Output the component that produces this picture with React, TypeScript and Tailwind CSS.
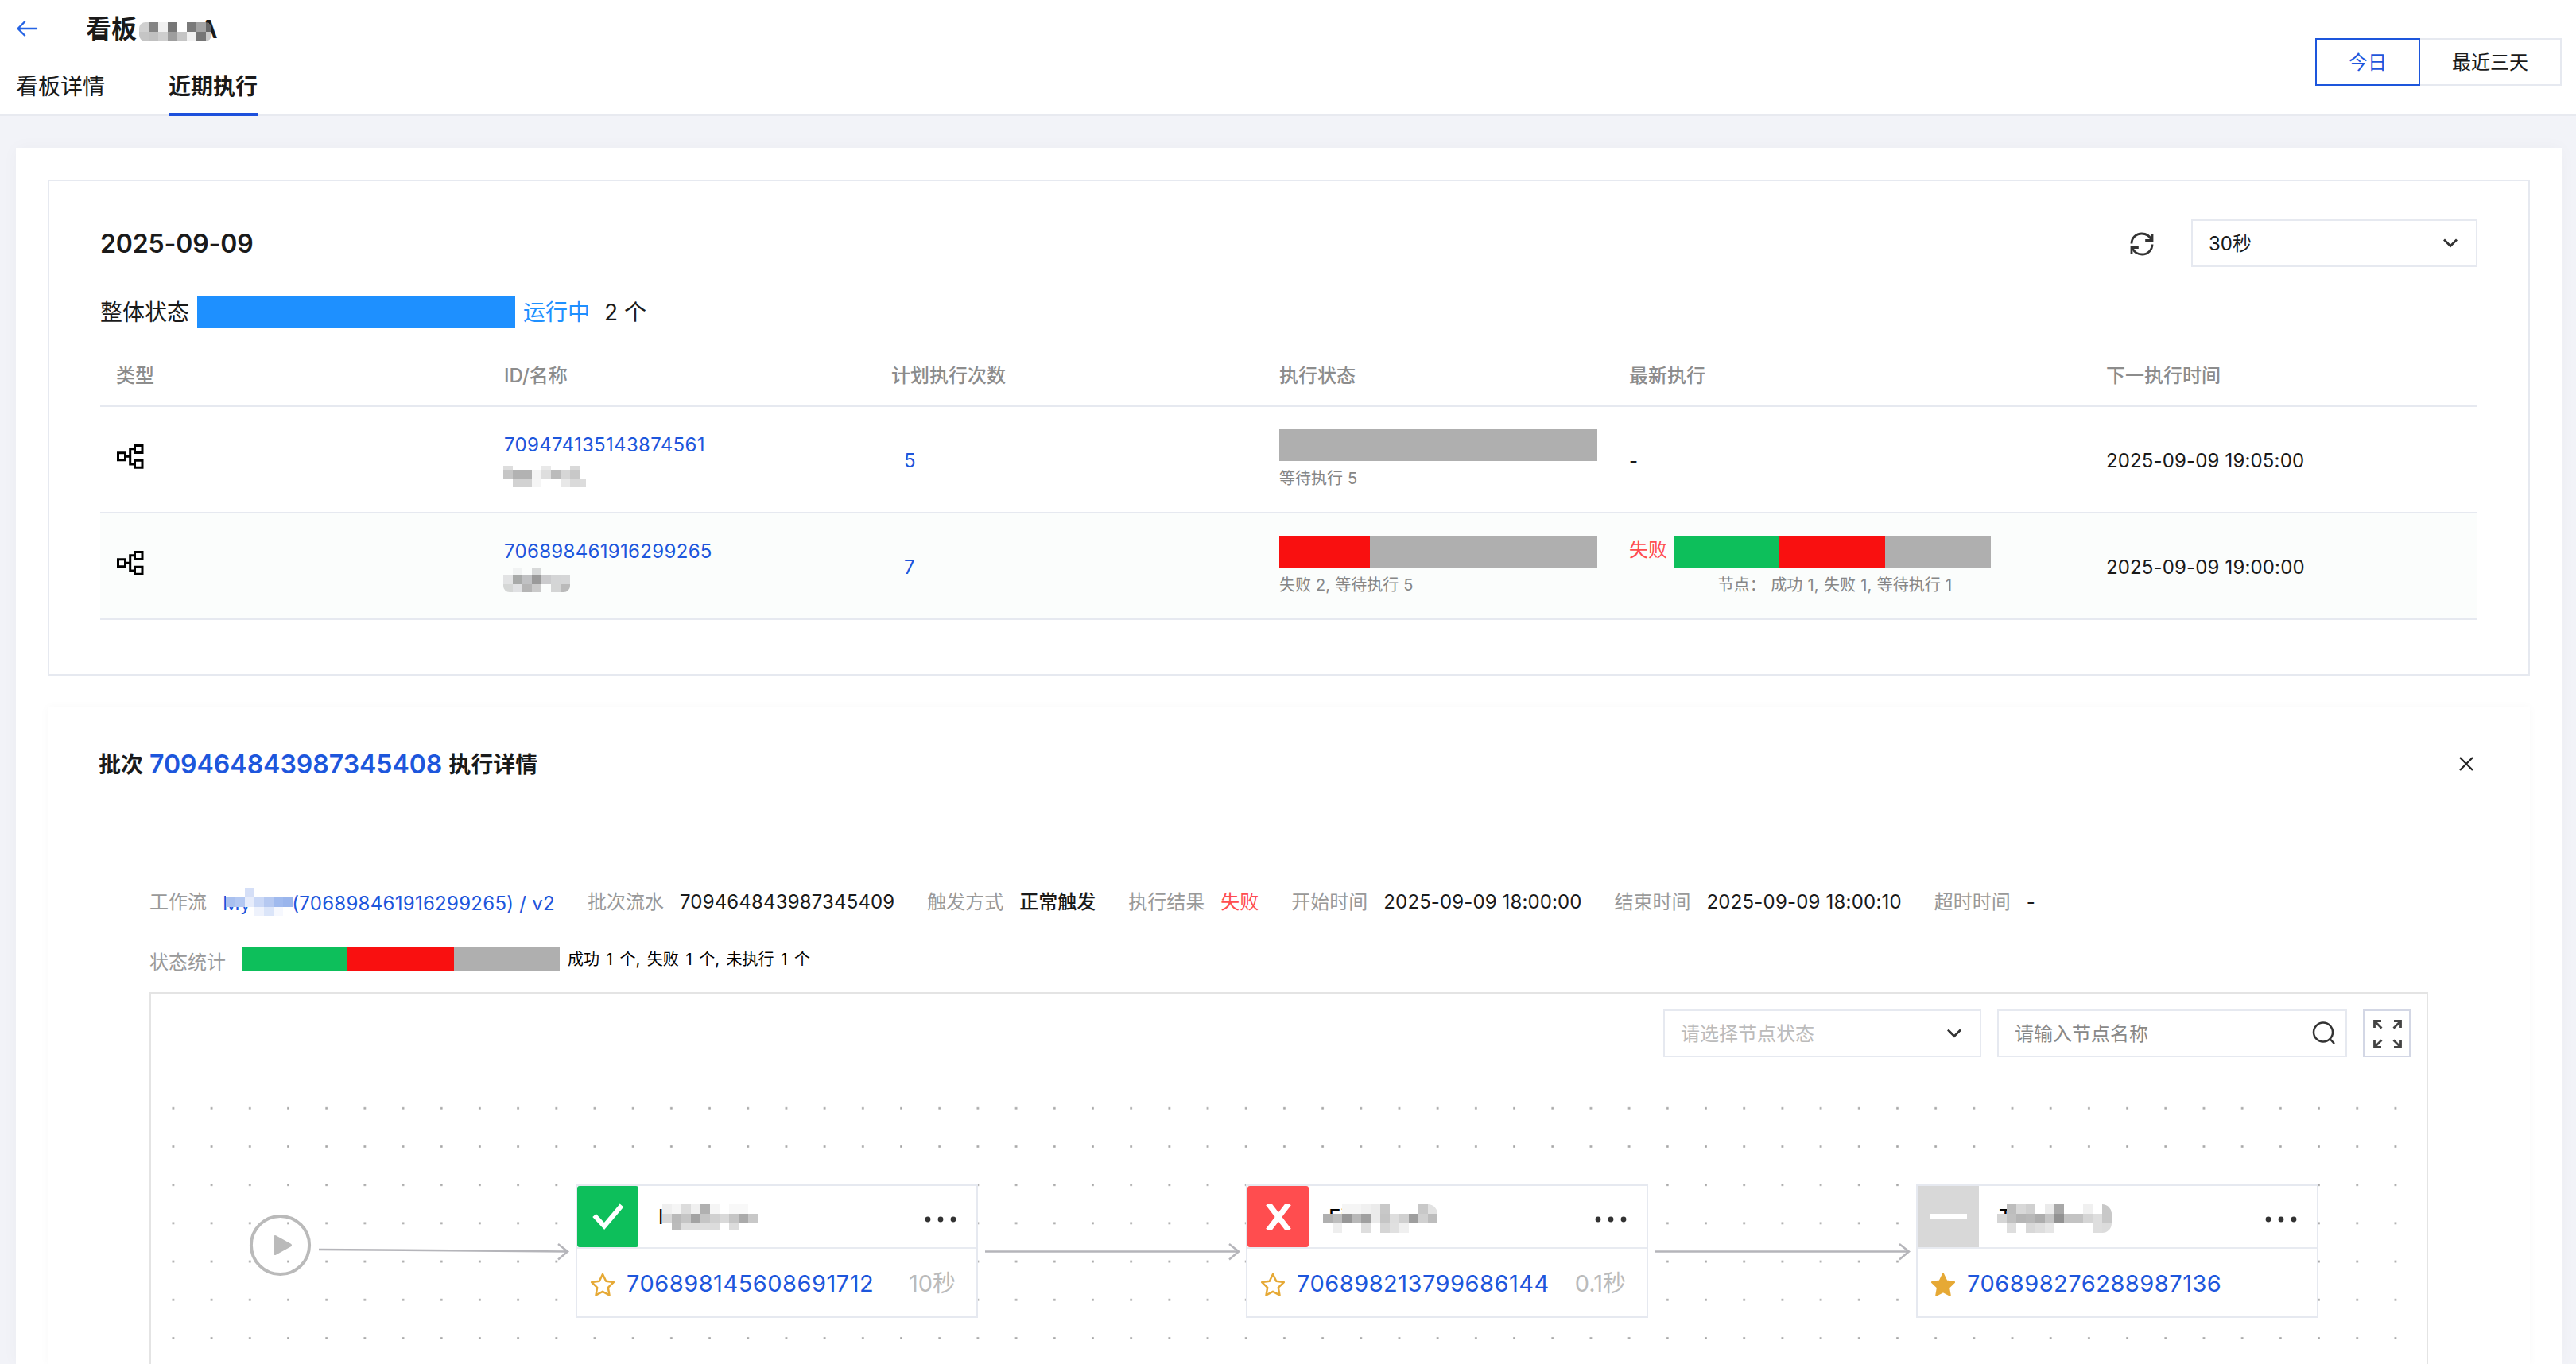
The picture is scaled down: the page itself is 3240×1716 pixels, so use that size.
import React from "react";

const SANS = "font-['Inter','Noto_Sans_CJK_SC',sans-serif]";

/* ---------- masked (pixelated) names ---------- */

type Cells = (string | 0)[][];

function Mosaic({ rows, className }: { rows: Cells; className: string }) {
  return (
    <div className={`absolute overflow-hidden ${className}`}>
      {rows.map((row, r) => (
        <div key={r} className="flex h-3">
          {row.map((c, i) => (
            <div key={i} className="h-3 w-3 shrink-0" style={c ? { backgroundColor: c } : undefined} />
          ))}
        </div>
      ))}
    </div>
  );
}

const titleMask: Cells = [
  ["#d0d0d0", "#848484", "#f0f0f0", "#777777", "#ffffff", "#7a7a7a", "#a3a3a3", "#666666"],
  ["#c5c5c5", "#c0c0c0", "#cecece", "#9e9e9e", "#c5c5c5", "#f0f0f0", "#757575", "#c9c9c9"],
];
const rowOneMask: Cells = [
  ["#dddddd", 0, 0, 0, "#e9e9e9", 0, 0, "#d9d9d9", 0],
  ["#c6c6c6", "#b2b2b2", "#b2b2b2", "#f4f4f4", "#dedede", "#bbbbbb", "#d6d6d6", "#c8c8c8", 0],
  [0, "#d2d2d2", "#d2d2d2", "#f5f5f5", 0, 0, "#e8e8e8", "#dadada", "#dcdcdc"],
];
const rowTwoMask: Cells = [
  [0, "#f1f3f3", 0, "#d7d9d9", 0, 0, 0],
  ["#e2e3e4", "#a8aaa9", "#c0c1c3", "#9a9a9a", "#cbcbcd", "#d4d5d6", "#d5d6d7"],
  ["#d5d7d6", "#e0e1e3", "#b5b5b5", "#cacaca", 0, "#d4d5d5", "#bababa"],
];
const linkMask: Cells = [
  ["#ffffff", "#ffffff", "#d5dff7", "#ffffff", "#ffffff", "#ffffff", "#ffffff"],
  ["#a9c0ef", "#b3c8f2", "#e6ecfb", "#cad8f6", "#b6c9f1", "#a0baee", "#9ab5ec"],
  [0, 0, 0, "#eef2fc", "#dbe5f9", "#f6f8fe", 0],
];
const nodeOneMask: Cells = [
  ["#efefef", "#f5f5f5", "#dcdcdc", "#f0f0f0", "#b0b0b0", "#f5f5f5", 0, "#f8f8f8", "#f8f8f8", 0],
  ["#d8d8d8", "#b9b9b9", "#c5c5c5", "#a3a3a3", "#c5c5c5", "#d0d0d0", "#d9d9d9", "#c5c5c5", "#aaaaaa", "#c8c8c8"],
  [0, "#bbbbbb", "#dedede", "#dedede", "#dedede", "#dcdcdc", 0, "#dcdcdc", 0, 0],
];
const nodeTwoMask: Cells = [
  [0, 0, "#f5f5f5", "#f5f5f5", "#f0f0f0", "#ebebeb", "#c8c8c8", 0, 0, 0, "#c8c8c8", "#e2e2e2"],
  ["#b0b0b0", "#bdbdbd", "#979797", "#b8b8b8", "#a0a0a0", "#ebebeb", "#c5c5c5", "#dedede", "#d0d0d0", "#9e9e9e", "#d0d0d0", "#bdbdbd"],
  ["#ffffff", "#eeeeee", "#ffffff", 0, "#dedede", 0, "#d5d5d5", "#e0e0e0", "#f0f0f0", 0, 0, 0],
];
const nodeThreeMask: Cells = [
  [0, "#bdbdbd", "#d8d8d8", "#d0d0d0", 0, "#ebebeb", "#a8a8a8", 0, 0, "#f0f0f0", 0, "#c8c8c8"],
  ["#d5d5d5", "#c0c0c0", "#b5b5b5", "#b8b8b8", "#adadad", "#c5c5c5", "#929292", "#c3c3c3", "#c3c3c3", "#d5d5d5", "#dedede", "#c8c8c8"],
  ["#ffffff", "#dedede", "#ffffff", "#d8d8d8", "#dedede", "#e6e6e6", 0, 0, 0, 0, "#dedede", "#dcdcdc"],
];

/* ---------- icons ---------- */

function BackIcon() {
  return (
    <svg className="-mt-[2px]" width="28" height="20" viewBox="0 0 28 20" fill="none" stroke="#2563e4" strokeWidth="2.4" strokeLinecap="round" strokeLinejoin="round">
      <path d="M26 10H2.5M11 1.5 2.5 10l8.5 8.5" />
    </svg>
  );
}

function RefreshIcon() {
  return (
    <svg className="mt-[2px]" width="30" height="30" viewBox="0 0 30 30" fill="none" stroke="#333" strokeWidth="2.8">
      <path d="M2 14.6C2 7.4 7.700 2 14.800 2c5.200 0 9.900 3 12 7.500" />
      <path d="M28 2v8.500h-8.800" />
      <path d="M28 15.400C28 22.600 22.300 28 15.200 28c-5.200 0-9.900-3-12-7.500" />
      <path d="M2 28v-8.500h8.800" />
    </svg>
  );
}

function Chevron() {
  return (
    <svg width="20" height="14" viewBox="0 0 20 14" fill="none" stroke="#333" strokeWidth="2.8">
      <path d="M2 2.500 10 10.500l8-8" />
    </svg>
  );
}

function FlowIcon() {
  return (
    <svg width="34" height="31" viewBox="0 0 34 31" fill="none" stroke="#000" strokeWidth="3">
      <path d="M1.500 10.800h9v9h-9zM22.500 1.500h9.500v9h-9.500zM22.500 20.300h9.500v9h-9.500zM10.500 15.300h6.200M22.500 5.700h-5.800v19.200h5.800" />
    </svg>
  );
}

function CloseIcon() {
  return (
    <svg width="20" height="20" viewBox="0 0 20 20" stroke="#222" strokeWidth="2.3">
      <path d="M2 2l16 16M18 2 2 18" />
    </svg>
  );
}

function SearchIcon() {
  return (
    <svg width="30" height="30" viewBox="0 0 30 30" fill="none" stroke="#333" strokeWidth="2.500">
      <circle cx="14" cy="13.500" r="12" />
      <path d="M22.500 22l5.500 6" />
    </svg>
  );
}

function ExpandIcon() {
  return (
    <svg width="36" height="36" viewBox="0 0 36 36" fill="none" stroke="#444" strokeWidth="2.800">
      <path d="M1.500 10V1.500H10M1.500 1.500l9 9M26 1.500h8.500V10M34.500 1.500l-9 9M1.500 26v8.500H10M1.500 34.500l9-9M34.500 26v8.500H26M34.500 34.500l-9-9" />
    </svg>
  );
}

function StarIcon({ filled }: { filled?: boolean }) {
  return (
    <svg className="mt-[3px]" width="32" height="31" viewBox="0 0 32 31" fill={filled ? "#e6a935" : "none"} stroke="#e6a935" strokeWidth="2.500" strokeLinejoin="round">
      <path d="M16 2l4.200 8.800 9.600 1.300-7 6.700 1.700 9.600L16 23.800l-8.500 4.600 1.700-9.600-7-6.700 9.600-1.300z" />
    </svg>
  );
}

function DotsIcon() {
  return (
    <svg width="40" height="8" viewBox="0 0 40 8" fill="#333">
      <circle cx="4" cy="4" r="3.400" />
      <circle cx="20" cy="4" r="3.400" />
      <circle cx="36" cy="4" r="3.400" />
    </svg>
  );
}

/* ---------- status bars ---------- */

const green = "bg-[#0dbf5b]";
const red = "bg-[#f91010]";
const gray = "bg-[#afafaf]";

function Bar({ parts, className }: { parts: [string, number][]; className: string }) {
  return (
    <div className={`flex shrink-0 ${className}`}>
      {parts.map(([color, weight], i) => (
        <div key={i} className={`h-full basis-0 ${color}`} style={{ flexGrow: weight }} />
      ))}
    </div>
  );
}

/* ---------- table ---------- */

const columns = "grid grid-cols-[488px_487px_488px_440px_600px_487px]";

function TableHead() {
  return (
    <div className={`${columns} h-[80px] border-b-2 border-[#e6e9f0] text-2xl font-medium leading-[82px] text-[#8c8c8c]`}>
      {["类型", "ID/名称", "计划执行次数", "执行状态", "最新执行", "下一执行时间"].map((t) => (
        <div key={t} className="pl-5">{t}</div>
      ))}
    </div>
  );
}

function TableRow({ id, mask, maskClass, count, parts, summary, latest, next, striped }: {
  id: string;
  mask: Cells;
  maskClass: string;
  count: number;
  parts: [string, number][];
  summary: string;
  latest: React.ReactNode;
  next: string;
  striped?: boolean;
}) {
  return (
    <div className={`${columns} h-[134px] border-b-2 border-[#e6e9f0] text-2xl ${striped ? "bg-[#fbfdfc]" : ""}`}>
      <div className="pl-[21px] pt-[47px]"><FlowIcon /></div>
      <div className="relative pl-5 pt-[32px]">
        <div className="leading-8 tracking-[0.32px] text-[#1d56dc]">{id}</div>
        <Mosaic rows={mask} className={maskClass} />
      </div>
      <div className="pl-9 pt-[52px] leading-8 text-[#1d56dc]">{count}</div>
      <div className="pl-5 pt-[28px]">
        <Bar parts={parts} className="h-10 w-[400px]" />
        <div className="mt-[9px] text-xl leading-[26px] text-[#868686] [word-spacing:0.5px]">{summary}</div>
      </div>
      <div className="pl-5">{latest}</div>
      <div className="pl-5 pt-[52px] leading-8 tracking-[0.15px] text-[#1a1a1a]">{next}</div>
    </div>
  );
}

/* ---------- detail facts ---------- */

function Fact({ label, children }: { label: string; children: React.ReactNode }) {
  return (
    <div className="flex gap-5">
      <span className="text-[#999]">{label}</span>
      {children}
    </div>
  );
}

/* ---------- workflow canvas ---------- */

function NodeCard({ className, badge, name, mask, maskClass, id, duration, starred }: {
  className: string;
  badge: React.ReactNode;
  name: string;
  mask: Cells;
  maskClass: string;
  id: string;
  duration?: string;
  starred?: boolean;
}) {
  return (
    <div className={`absolute h-[168px] w-[506px] border-2 border-[#e6e9f0] bg-white ${className}`}>
      <div className="relative flex h-[79px] items-start border-b-2 border-[#e8ebf1]">
        {badge}
        <div className="ml-[25px] flex-1 text-[26px] leading-[78px] text-black">{name}</div>
        <div className="mr-[25px] mt-[38px]"><DotsIcon /></div>
        <Mosaic rows={mask} className={maskClass} />
      </div>
      <div className="flex h-[85px] items-center pl-4 pr-[26px] pt-[3px] text-[29px]">
        <StarIcon filled={starred} />
        <span className="ml-[14px] flex-1 tracking-[0.5px] text-[#1d56dc]">{id}</span>
        {duration && <span className="text-[#bbb]">{duration}</span>}
      </div>
    </div>
  );
}

function Canvas() {
  return (
    <div className="relative -mt-px flex-1 overflow-hidden">
      <svg className="absolute inset-0 h-full w-full" fill="none">
        <defs>
          <pattern id="dots" x="3.800" y="17.200" width="48.190" height="48.190" patternUnits="userSpaceOnUse">
            <rect x="22.800" y="22.800" width="2.600" height="2.600" fill="#a3a3a3" />
          </pattern>
        </defs>
        <rect width="2864" height="400" fill="url(#dots)" />
        <g stroke="#b5b5ba" strokeWidth="2.500">
          <path d="M211 219 524 221.500M512 212l12 9.500-12 10" />
          <path d="M1049 221.500h319M1356 212l12 9.500-12 10" />
          <path d="M1892 221.500h319M2199 212l12 9.500-12 10" />
        </g>
        <circle cx="162.500" cy="213.500" r="36.600" stroke="#bababa" strokeWidth="4" />
        <path d="M156 203 175 213.500l-19 10.500z" fill="#bababa" stroke="#bababa" strokeWidth="4" strokeLinejoin="round" />
      </svg>
      <NodeCard
        className="left-[534px] top-[137px]"
        badge={
          <div className="flex h-[77px] w-[77px] items-center justify-center rounded-[3px] bg-[#0dbf5b]">
            <svg width="40" height="34" viewBox="0 0 40 34" fill="none" stroke="#fff" strokeWidth="6">
              <path d="M2.500 15 15 28.500 37 2.500" />
            </svg>
          </div>
        }
        name="l"
        mask={nodeOneMask}
        maskClass="left-[107px] top-[23px] [clip-path:inset(0_0_4px_0)]"
        id="706898145608691712"
        duration="10秒"
      />
      <NodeCard
        className="left-[1377px] top-[137px]"
        badge={
          <div className="flex h-[77px] w-[77px] items-center justify-center rounded-[3px] bg-[#ff4d4f]">
            <svg width="34" height="32" viewBox="0 0 34 32" fill="none" stroke="#fff" strokeWidth="7">
              <path d="M4 -1l26 34M30 -1 4 33" />
            </svg>
          </div>
        }
        name="Fi"
        mask={nodeTwoMask}
        maskClass="left-[95px] top-[23px] rounded-r-xl"
        id="706898213799686144"
        duration="0.1秒"
      />
      <NodeCard
        className="left-[2220px] top-[137px]"
        badge={
          <div className="flex h-[77px] w-[77px] items-center justify-center bg-[#d8d8d8]">
            <div className="h-[7px] w-[46px] bg-white" />
          </div>
        }
        name="T"
        mask={nodeThreeMask}
        maskClass="left-[100px] top-[23px] rounded-r-xl"
        id="706898276288987136"
        starred
      />
    </div>
  );
}

/* ---------- page ---------- */

export default function App() {
  return (
    <div className={`flex h-[1716px] w-full flex-col overflow-hidden bg-[#f2f3f8] text-[#1a1a1a] ${SANS}`}>
      <header className="flex h-[146px] shrink-0 justify-between border-b-2 border-[#e8eaf0] bg-white pl-5 pr-[18px]">
        <div className="h-[146px]">
          <div className="flex h-[74px] items-center">
            <BackIcon />
            <div className="relative ml-[60px] w-[170px] text-[32px] font-semibold leading-[74px]">
              看板
              <span className="absolute left-[143px] top-0 text-[31px]">A</span>
              <Mosaic rows={titleMask} className="left-[67px] top-[28px] w-[91px] rounded-lg" />
            </div>
          </div>
          <nav className="flex gap-20 text-[28px] leading-[70px]">
            <div className="h-[72px]">看板详情</div>
            <div className="h-[72px] border-b-4 border-[#1d50dc] font-semibold">近期执行</div>
          </nav>
        </div>
        <div className="flex pt-12 text-2xl leading-[58px]">
          <div className="h-[60px] w-[132px] border-2 border-[#1d56dc] text-center text-[#1d56dc]">今日</div>
          <div className="h-[60px] w-[178px] border-2 border-l-0 border-[#e6e9f0] text-center">最近三天</div>
        </div>
      </header>

      <main className="ml-5 mr-[18px] mt-10 flex flex-1 flex-col bg-white px-10 pt-10 shadow-[0_0_20px_rgba(0,0,40,0.03)]">
        <section className="h-[624px] shrink-0 border-2 border-[#e6e9f0] px-16">
          <div className="mt-12 flex h-[60px] items-center">
            <h2 className="flex-1 pt-[2px] text-[32px] font-semibold tracking-[-0.15px]">2025-09-09</h2>
            <RefreshIcon />
            <div className="ml-[47px] flex h-[60px] w-[360px] items-center justify-between border-2 border-[#e6e9f0] pl-5 pr-[22px] text-2xl">
              <span className="pt-[2px]">30秒</span>
              <Chevron />
            </div>
          </div>
          <div className="mt-[37px] flex h-10 items-center text-[28px] leading-10">
            <span>整体状态</span>
            <div className="ml-[10px] h-10 w-[400px] bg-[#1e90ff]" />
            <span className="ml-[10px] text-[#1e90ff]">运行中</span>
            <span className="ml-[18px]">2 个</span>
          </div>
          <div className="mt-[19px]">
            <TableHead />
            <TableRow
              id="709474135143874561"
              mask={rowOneMask}
              maskClass="left-[19px] top-[67px] [clip-path:inset(7px_4px_2px_0)]"
              count={5}
              parts={[[gray, 1]]}
              summary="等待执行 5"
              latest={<div className="pt-[52px] leading-8">-</div>}
              next="2025-09-09 19:05:00"
            />
            <TableRow
              id="706898461916299265"
              mask={rowTwoMask}
              maskClass="left-[19px] top-[65px] [clip-path:inset(4px_0_2px_0_round_0_0_8px_8px)]"
              count={7}
              parts={[[red, 2], [gray, 5]]}
              summary="失败 2, 等待执行 5"
              latest={
                <div className="w-[456px] pt-[28px]">
                  <div className="flex gap-2">
                    <span className="leading-9 text-[#ff4d4f]">失败</span>
                    <Bar parts={[[green, 1], [red, 1], [gray, 1]]} className="h-10 w-[399px]" />
                  </div>
                  <div className="mt-[9px] whitespace-nowrap pl-[62px] text-center text-xl leading-[26px] text-[#868686] [word-spacing:0.8px]">
                    节点：&nbsp;成功 1, 失败 1, 等待执行 1
                  </div>
                </div>
              }
              next="2025-09-09 19:00:00"
              striped
            />
          </div>
        </section>

        <section className="mt-10 flex flex-1 flex-col px-16 shadow-[0_0_12px_rgba(0,0,0,0.03)]">
          <div className="mt-[51px] flex h-10 items-center justify-between">
            <h3 className="flex items-center gap-2 pt-[2px] text-[28px] font-semibold">
              <span>批次</span>
              <span className="text-[32px] text-[#1d56dc]">709464843987345408</span>
              <span>执行详情</span>
            </h3>
            <div className="mr-[6px]"><CloseIcon /></div>
          </div>

          <div className="mt-[138px] flex h-8 gap-[41px] pl-16 text-2xl leading-8">
            <Fact label="工作流">
              <span className="relative top-[2px] w-[418px] text-right tracking-[0.28px] text-[#1d56dc]">
                <span className="absolute left-0 top-0">My</span>
                (706898461916299265) / v2
                <Mosaic rows={linkMask} className="left-[4px] top-[-4px]" />
              </span>
            </Fact>
            <Fact label="批次流水"><span className="tracking-[0.15px]">709464843987345409</span></Fact>
            <Fact label="触发方式"><span className="font-medium">正常触发</span></Fact>
            <Fact label="执行结果"><span className="text-[#ff4d4f]">失败</span></Fact>
            <Fact label="开始时间"><span className="tracking-[0.12px]">2025-09-09 18:00:00</span></Fact>
            <Fact label="结束时间"><span className="tracking-[0.2px]">2025-09-09 18:00:10</span></Fact>
            <Fact label="超时时间"><span>-</span></Fact>
          </div>

          <div className="mt-[41px] flex h-[56px] pl-16">
            <span className="pt-[2px] text-2xl leading-[34px] text-[#999]">状态统计</span>
            <Bar parts={[[green, 1], [red, 1], [gray, 1]]} className="ml-5 h-[30px] w-[400px]" />
            <span className="ml-[10px] text-xl leading-[31px] text-black [word-spacing:3px]">成功 1 个, 失败 1 个, 未执行 1 个</span>
          </div>

          <div className="ml-16 mr-16 flex flex-1 flex-col border-2 border-b-0 border-[#e4e4e4]">
            <div className="mt-5 flex h-[84px] justify-end gap-5 pr-5 text-2xl leading-[56px]">
              <div className="flex h-[60px] w-[400px] items-center justify-between border-2 border-[#e6e9f0] pl-5 pr-[22px] text-[#bbb]">
                <span className="pt-px">请选择节点状态</span>
                <Chevron />
              </div>
              <div className="flex h-[60px] w-[440px] items-center justify-between border-2 border-[#e6e9f0] pl-5 pr-3 text-[#888]">
                <span className="pt-px">请输入节点名称</span>
                <SearchIcon />
              </div>
              <div className="flex h-[60px] w-[60px] items-center justify-center border-2 border-[#d3d7e5] pl-[2px] pt-[2px]">
                <ExpandIcon />
              </div>
            </div>
            <Canvas />
          </div>
        </section>
      </main>
    </div>
  );
}
